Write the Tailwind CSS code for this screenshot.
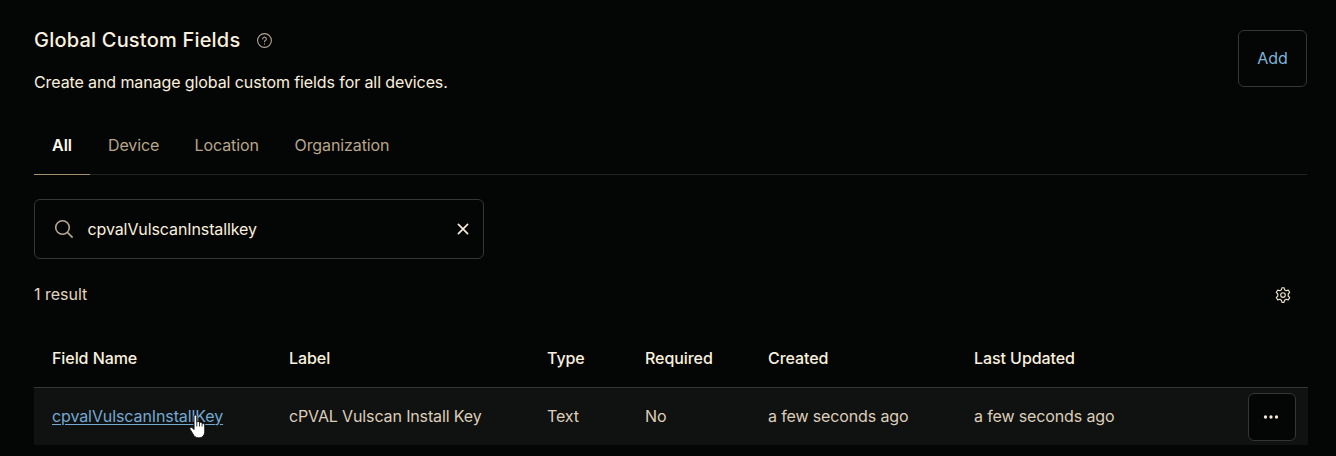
<!DOCTYPE html>
<html lang="en">
<head>
<meta charset="utf-8">
<title>Global Custom Fields</title>
<script src="https://cdn.jsdelivr.net/npm/@tailwindcss/browser@4"></script>
</head>
<body class="h-[456px] overflow-hidden bg-[#040605] font-['Inter',sans-serif] text-base leading-6 text-[#fbf0df]">
<main class="flex flex-col pl-[34px] pr-[29px] pt-7">
  <header class="flex h-[90px] items-start justify-between">
    <div>
      <div class="flex h-6 items-center gap-4">
        <h1 class="text-xl font-medium leading-6 tracking-[0.2px]">Global Custom Fields</h1>
        <svg class="mt-px size-4" viewBox="0 0 16 16" fill="none" stroke="#b5a793" stroke-width="1.1" stroke-linecap="round"><circle cx="8.500" cy="7.500" r="6.900"/><path d="M6.700 5.900a1.800 1.800 0 1 1 2.700 1.600c-.6.3-.9.6-.9 1.200M8.500 10.700v.2"/></svg>
      </div>
      <p class="mt-[18px] tracking-[-0.1px]">Create and manage global custom fields for all devices.</p>
    </div>
    <button class="mt-0.5 h-[57px] w-[69px] rounded-md border border-[#343736] pb-0.5 text-[#7eb3d9]">Add</button>
  </header>
  <nav class="flex h-[57px] border-b border-[#202221] tracking-[-0.1px] text-[#b9a58b]">
    <a class="-mb-px w-14 border-b border-[#a4916f] pl-[18px] pt-[15px] font-semibold tracking-normal text-[#fff8ec]">All</a>
    <a class="w-[86.500px] pl-[18px] pt-[15px]">Device</a>
    <a class="w-[100px] pl-[18px] pt-[15px]">Location</a>
    <a class="pl-[18px] pt-[15px]">Organization</a>
  </nav>
  <div class="mt-6 flex h-[60px] w-[450px] items-center rounded-md border border-[#343736] pl-[19px] pr-3.5">
    <svg class="size-5" viewBox="0 0 20 20" fill="none" stroke="#b8a594" stroke-width="1.6"><circle cx="8.500" cy="8.500" r="6.800"/><path d="M13.400 13.400l5.200 5.200"/></svg>
    <span class="ml-[13.500px] flex-1 tracking-[-0.1px]">cpvalVulscanInstallkey</span>
    <svg class="size-3" viewBox="0 0 12 12" fill="none" stroke="#f8eadb" stroke-width="1.700" stroke-linecap="round"><path d="M1.400 1.400l9.200 9.200M10.600 1.400l-9.200 9.200"/></svg>
  </div>
  <div class="mt-6 flex h-6 items-center justify-between pr-4">
    <span class="pb-0.5 text-[#e3d3c0]">1 result</span>
    <svg class="size-4" viewBox="0 0 16 16" fill="none" stroke="#eee1ca" stroke-width="1.150" stroke-linejoin="round"><path d="M7 .7h2l.6 2.100 1.500.9 2.100-.6 1.500 2.200L13.200 7v2l1.500 1.700-1.500 2.200-2.100-.6-1.500.9L9 15.300H7l-.6-2.100-1.500-.9-2.100.6-1.500-2.200L2.800 9V7L1.300 5.300l1.500-2.200 2.100.6 1.500-.9z"/><circle cx="8" cy="8" r="2.300"/></svg>
  </div>
  <section class="-mr-px mt-[23px]">
    <div class="grid h-[58px] grid-cols-[237px_258px_98px_123px_206px_1fr] items-center border-b border-[#343736] pb-0.5 pl-[18px] font-medium tracking-[-0.07px]">
      <span>Field Name</span><span>Label</span><span>Type</span><span>Required</span><span>Created</span><span>Last Updated</span>
    </div>
    <div class="grid h-[57px] grid-cols-[237px_258px_98px_123px_206px_1fr_48px] items-center bg-[#101211] pl-[18px] pr-3 tracking-[-0.13px] text-[#decdb9]">
      <a class="relative -mt-0.5 tracking-[-0.1px] text-[#74a9d2] underline decoration-1 underline-offset-2">cpvalVulscanInstallKey
        <svg class="absolute left-[137px] top-[11px] h-[24px] w-[18px]" viewBox="0 0 18 24" fill="#fff" stroke="#080808" stroke-width="1"><path d="M5 1.600c0-2 2.800-2 2.800 0V7c.8-1 2.500-.7 2.700.5 1-.7 2.400-.3 2.600.9 1.100-.6 2.700.1 2.700 1.500v6c0 4-2 7-6 7-3.500 0-5-2-6.200-4.500L.9 14.200c-.7-1.700 1.400-2.700 2.500-1.400L5 14.500z"/><path d="M7.800 7v4.500M10.500 7.500v4M13.100 8.500v3" stroke-width=".8"/></svg>
      </a>
      <span class="pb-0.5">cPVAL Vulscan Install Key</span><span class="pb-0.5">Text</span><span class="pb-0.5">No</span><span class="pb-0.5">a few seconds ago</span><span class="pb-0.5">a few seconds ago</span>
      <button class="flex size-12 items-center justify-center rounded-md border border-[#343736] bg-[#040605]"><svg class="-ml-0.5 h-1 w-4" viewBox="0 0 16 4" fill="#f8eadb"><circle cx="2.500" cy="2" r="1.650"/><circle cx="8" cy="2" r="1.650"/><circle cx="13.500" cy="2" r="1.650"/></svg></button>
    </div>
  </section>
</main>
</body>
</html>
